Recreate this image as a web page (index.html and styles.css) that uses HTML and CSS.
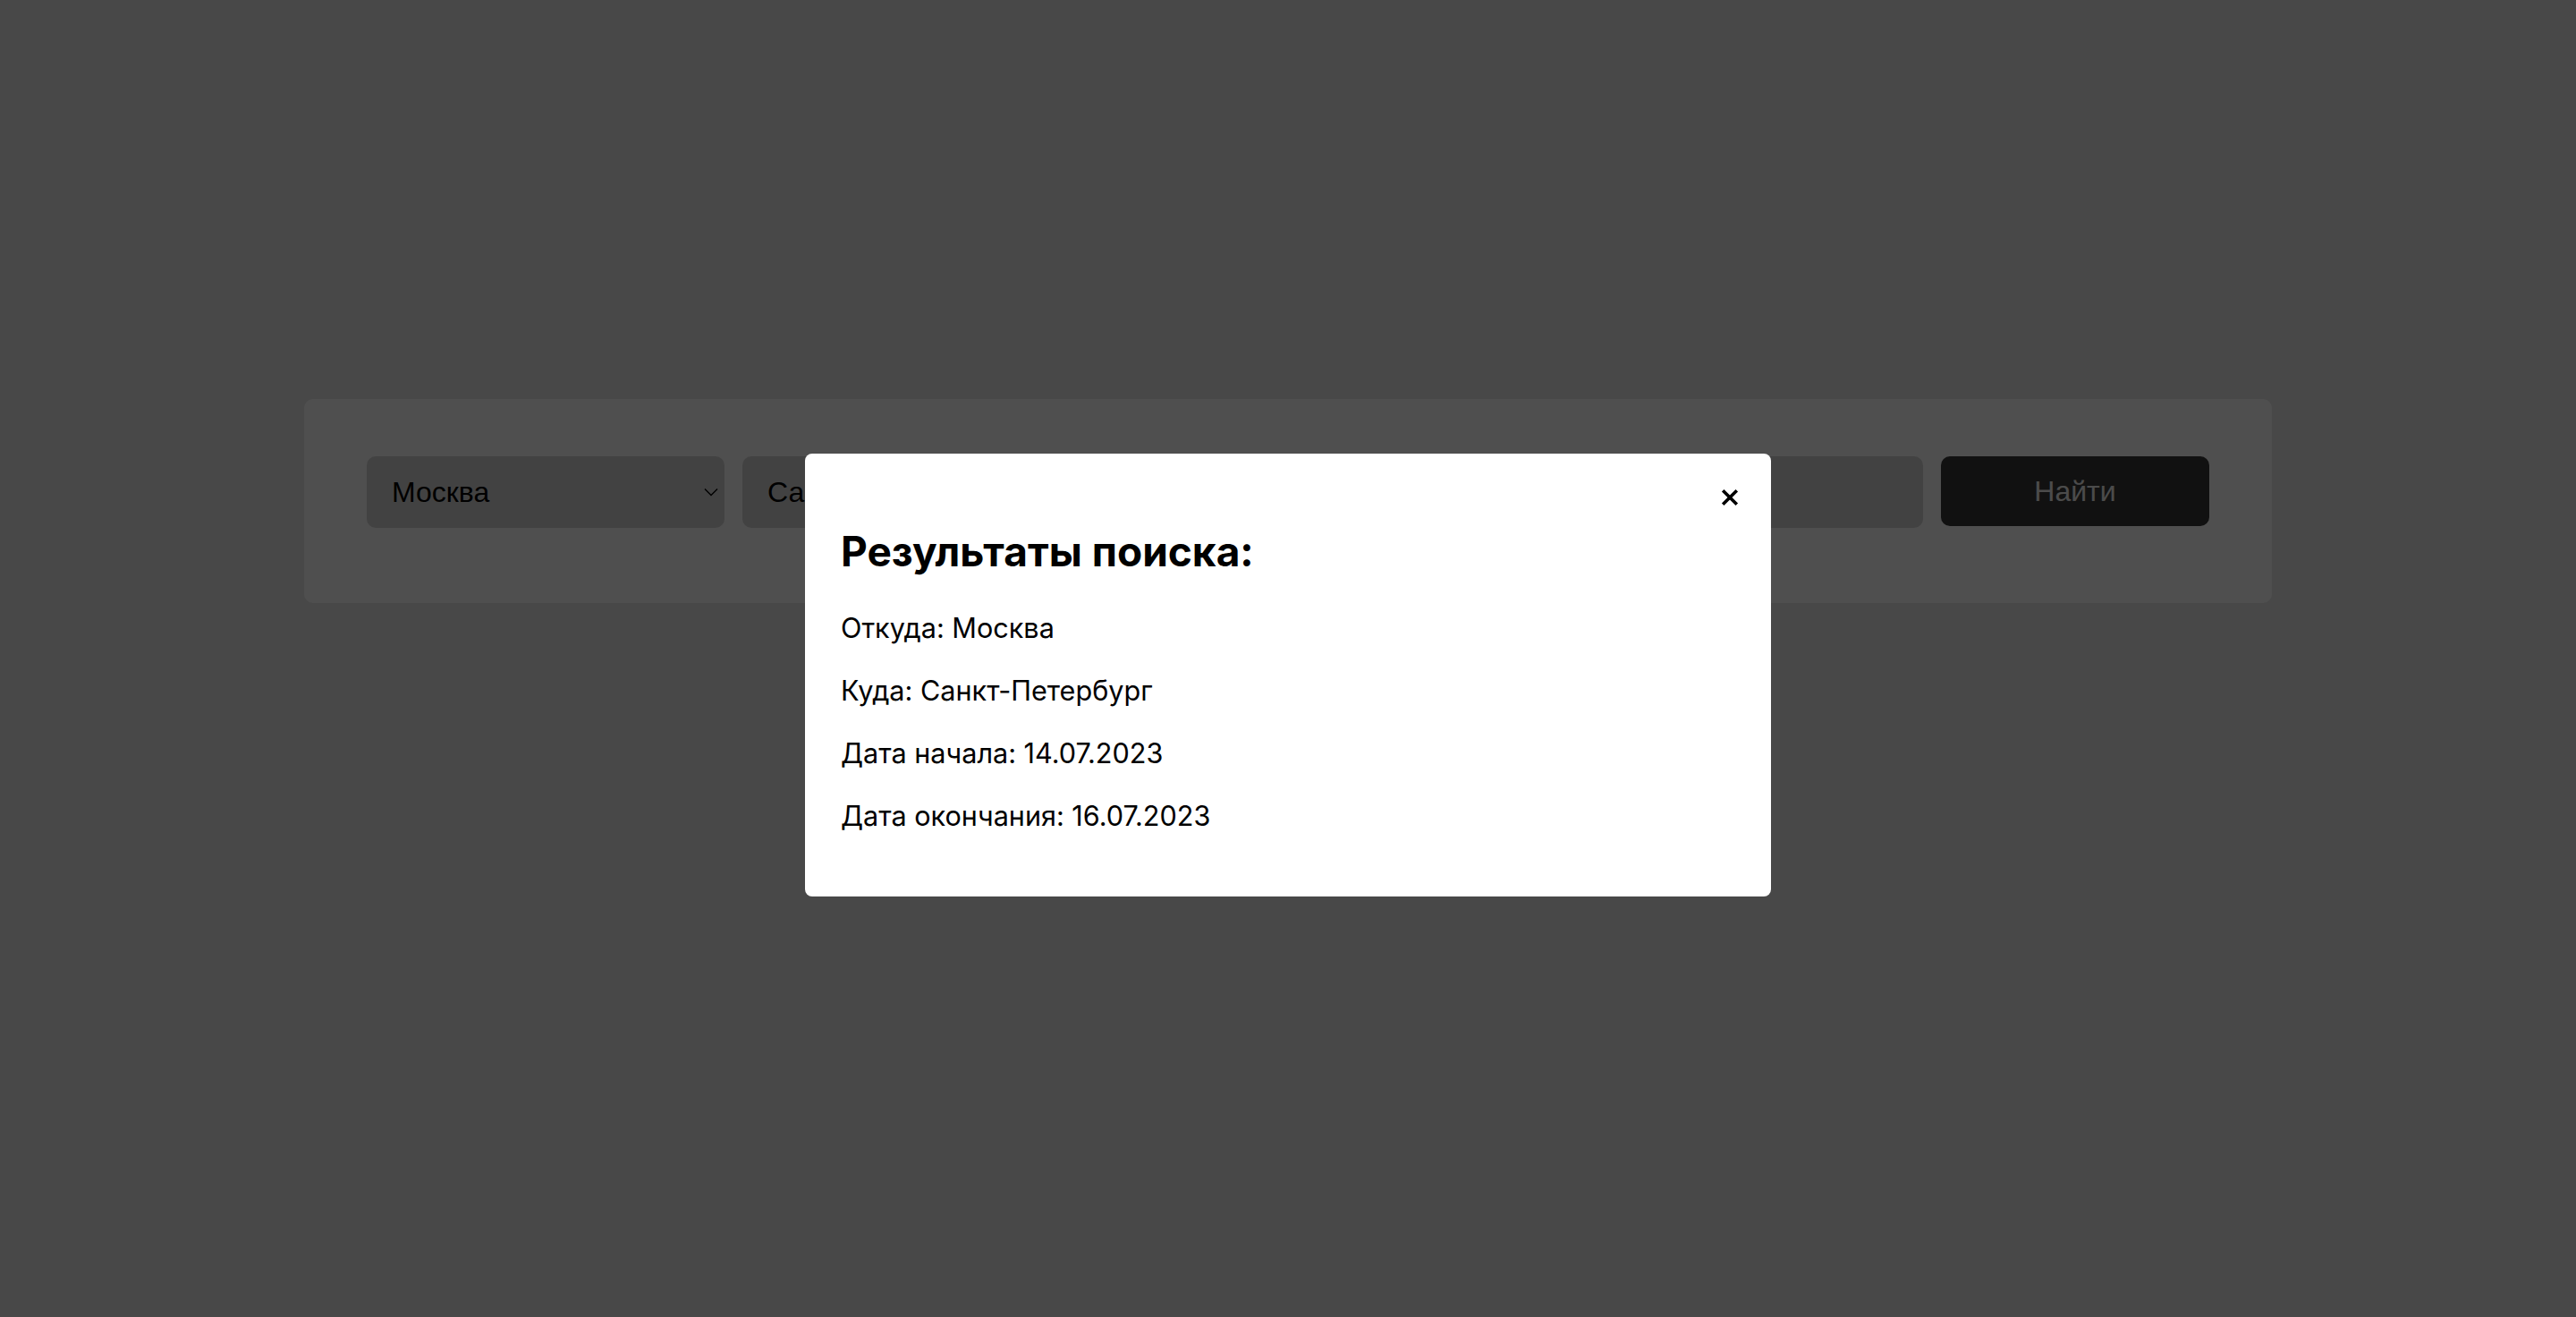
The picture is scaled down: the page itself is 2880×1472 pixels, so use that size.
FILE: index.html
```html
<!DOCTYPE html>
<html lang="ru">
<head>
<meta charset="utf-8">
<title>Поиск</title>
<link rel="stylesheet" href="styles.css">
</head>
<body>
<main class="page">
  <form class="search">
    <div class="select-wrap">
      <select class="field field-select">
        <option>Москва</option>
      </select>
      <svg class="chevron" viewBox="0 0 16 10" width="16" height="10"><polyline points="1,1.5 8,8.5 15,1.5" fill="none" stroke="#000" stroke-width="1.4"/></svg>
    </div>
    <div class="select-wrap">
      <select class="field field-select">
        <option>Санкт-Петербург</option>
      </select>
      <svg class="chevron" viewBox="0 0 16 10" width="16" height="10"><polyline points="1,1.5 8,8.5 15,1.5" fill="none" stroke="#000" stroke-width="1.4"/></svg>
    </div>
    <input class="field" type="text" value="14.07.2023">
    <input class="field" type="text" value="16.07.2023">
    <button class="search-btn" type="button">Найти</button>
  </form>
</main>

<div class="overlay">
  <div class="modal">
    <div class="modal-top">
      <button class="close" type="button" aria-label="Закрыть">
        <svg viewBox="0 0 20 20" width="20" height="20"><path d="M2.2 2.2 L17.8 17.8 M17.8 2.2 L2.2 17.8" stroke="#000" stroke-width="3.6" fill="none"/></svg>
      </button>
    </div>
    <h2 class="modal-title">Результаты поиска:</h2>
    <p class="modal-line">Откуда: Москва</p>
    <p class="modal-line">Куда: Санкт-Петербург</p>
    <p class="modal-line">Дата начала: 14.07.2023</p>
    <p class="modal-line">Дата окончания: 16.07.2023</p>
  </div>
</div>
</body>
</html>
```

FILE: styles.css
```css
html, body {
  margin: 0;
  padding: 0;
}

body {
  background: #e8e8e8;
  font-family: "Liberation Sans", Arial, sans-serif;
  min-height: 100vh;
}

.page {
  padding-top: 446px;
}

.search {
  box-sizing: border-box;
  width: 2200px;
  margin: 0 auto;
  padding: 64px 70px 84px;
  background: #ffffff;
  border-radius: 10px;
  display: grid;
  grid-template-columns: 400px 1fr 1fr 1fr 300px;
  column-gap: 20px;
  align-items: start;
}

.select-wrap {
  position: relative;
}

.field {
  box-sizing: border-box;
  width: 100%;
  height: 80px;
  margin: 0;
  padding: 0 28px;
  border: none;
  border-radius: 10px;
  background: #d5d5d5;
  color: #000;
  font-family: "Liberation Sans", Arial, sans-serif;
  font-size: 32px;
  outline: none;
}

.field-select {
  appearance: none;
  -webkit-appearance: none;
}

.chevron {
  position: absolute;
  right: 7px;
  top: 35px;
  pointer-events: none;
}

.search-btn {
  box-sizing: border-box;
  height: 78px;
  margin: 0;
  border: none;
  border-radius: 10px;
  background: #373737;
  color: #f2f2f2;
  font-family: "Liberation Sans", Arial, sans-serif;
  font-size: 32px;
}

.overlay {
  position: fixed;
  inset: 0;
  background: rgba(0, 0, 0, 0.69);
  display: flex;
  justify-content: center;
  align-items: flex-start;
  padding-top: 507px;
  box-sizing: border-box;
}

.modal {
  box-sizing: border-box;
  width: 1080px;
  padding: 39px 36px 72px 40px;
  background: #fff;
  border-radius: 8px;
  font-family: Inter, "Noto Sans", sans-serif;
  color: #000;
}

.modal-top {
  display: flex;
  justify-content: flex-end;
  height: 20px;
}

.close {
  display: block;
  width: 20px;
  height: 20px;
  padding: 0;
  margin: 0;
  border: none;
  background: none;
}

.close svg {
  display: block;
}

.modal-title {
  margin: 22px 0 40px;
  font-size: 46px;
  line-height: 56px;
  font-weight: 700;
}

.modal-line {
  margin: 0 0 34px;
  font-size: 30.6px;
  line-height: 36px;
}

.modal-line:last-child {
  margin-bottom: 0;
}
```
